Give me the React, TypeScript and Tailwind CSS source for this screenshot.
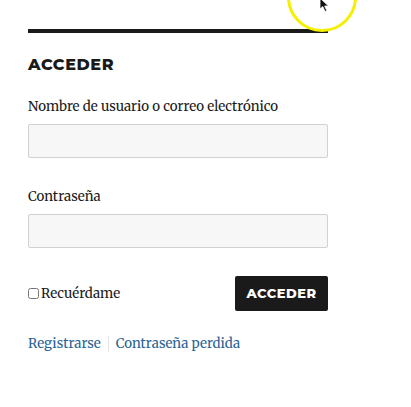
import React from "react";

const serif = "font-['Merriweather','DejaVu_Serif',serif]";
const heading = "font-['Montserrat','DejaVu_Sans',sans-serif]";

export default function App() {
  return (
    <div className="relative h-[407px] w-[411px] overflow-hidden bg-white">
      {/* Login widget */}
      <section className="ml-[28px] w-[300px] pt-[29px]">
        <div className="h-[4px] w-full bg-[#1a1a1a]" />
        <h2 className={`${heading} mt-[21px] text-[16px] font-extrabold leading-[22px] tracking-[0.6px] text-[#1a1a1a]`}>
          ACCEDER
        </h2>

        <form className={`${serif} mt-[21px] text-[13.3px] text-[#1a1a1a]`}>
          <label className="block leading-[20px]">Nombre de usuario o correo electrónico</label>
          <input
            type="text"
            className="mt-[7px] block h-[34px] w-full rounded-[2px] border border-[#d1d1d1] bg-[#f7f7f7]"
          />

          <label className="mt-[29px] block leading-[20px]">Contraseña</label>
          <input
            type="password"
            className="mt-[7px] block h-[34px] w-full rounded-[2px] border border-[#d1d1d1] bg-[#f7f7f7]"
          />

          <div className="mt-[28px] flex items-center justify-between">
            <label className="flex items-center leading-[20px]">
              <input type="checkbox" className="m-0 h-[11px] w-[11px] rounded-[2px] border border-[#767676]" />
              <span className="ml-[2px]">Recuérdame</span>
            </label>
            <button
              type="button"
              className={`${heading} h-[35px] w-[93px] rounded-[2px] bg-[#1a1a1a] text-[13px] font-extrabold tracking-[0.5px] text-white`}
            >
              ACCEDER
            </button>
          </div>
        </form>

        <nav className={`${serif} mt-[23px] flex items-center text-[13.3px] leading-[20px] text-[#2a6496]`}>
          <a>Registrarse</a>
          <span className="mx-[7px] h-[16px] w-px bg-[#e5e5e5]" />
          <a>Contraseña perdida</a>
        </nav>
      </section>

      {/* Cursor highlight */}
      <div className="pointer-events-none absolute left-[287px] top-[-38px] h-[70px] w-[70px] rounded-full border-[3px] border-[#f5f000]" />
      <svg className="pointer-events-none absolute left-[319px] top-[-2px]" width="12" height="15" viewBox="0 0 12 15">
        <path d="M1 0 L1 11 L3.8 8.6 L6 13.5 L7.8 12.7 L5.7 8 L9.5 8 Z" fill="#111" stroke="#fff" strokeWidth="0.8" />
      </svg>
    </div>
  );
}
